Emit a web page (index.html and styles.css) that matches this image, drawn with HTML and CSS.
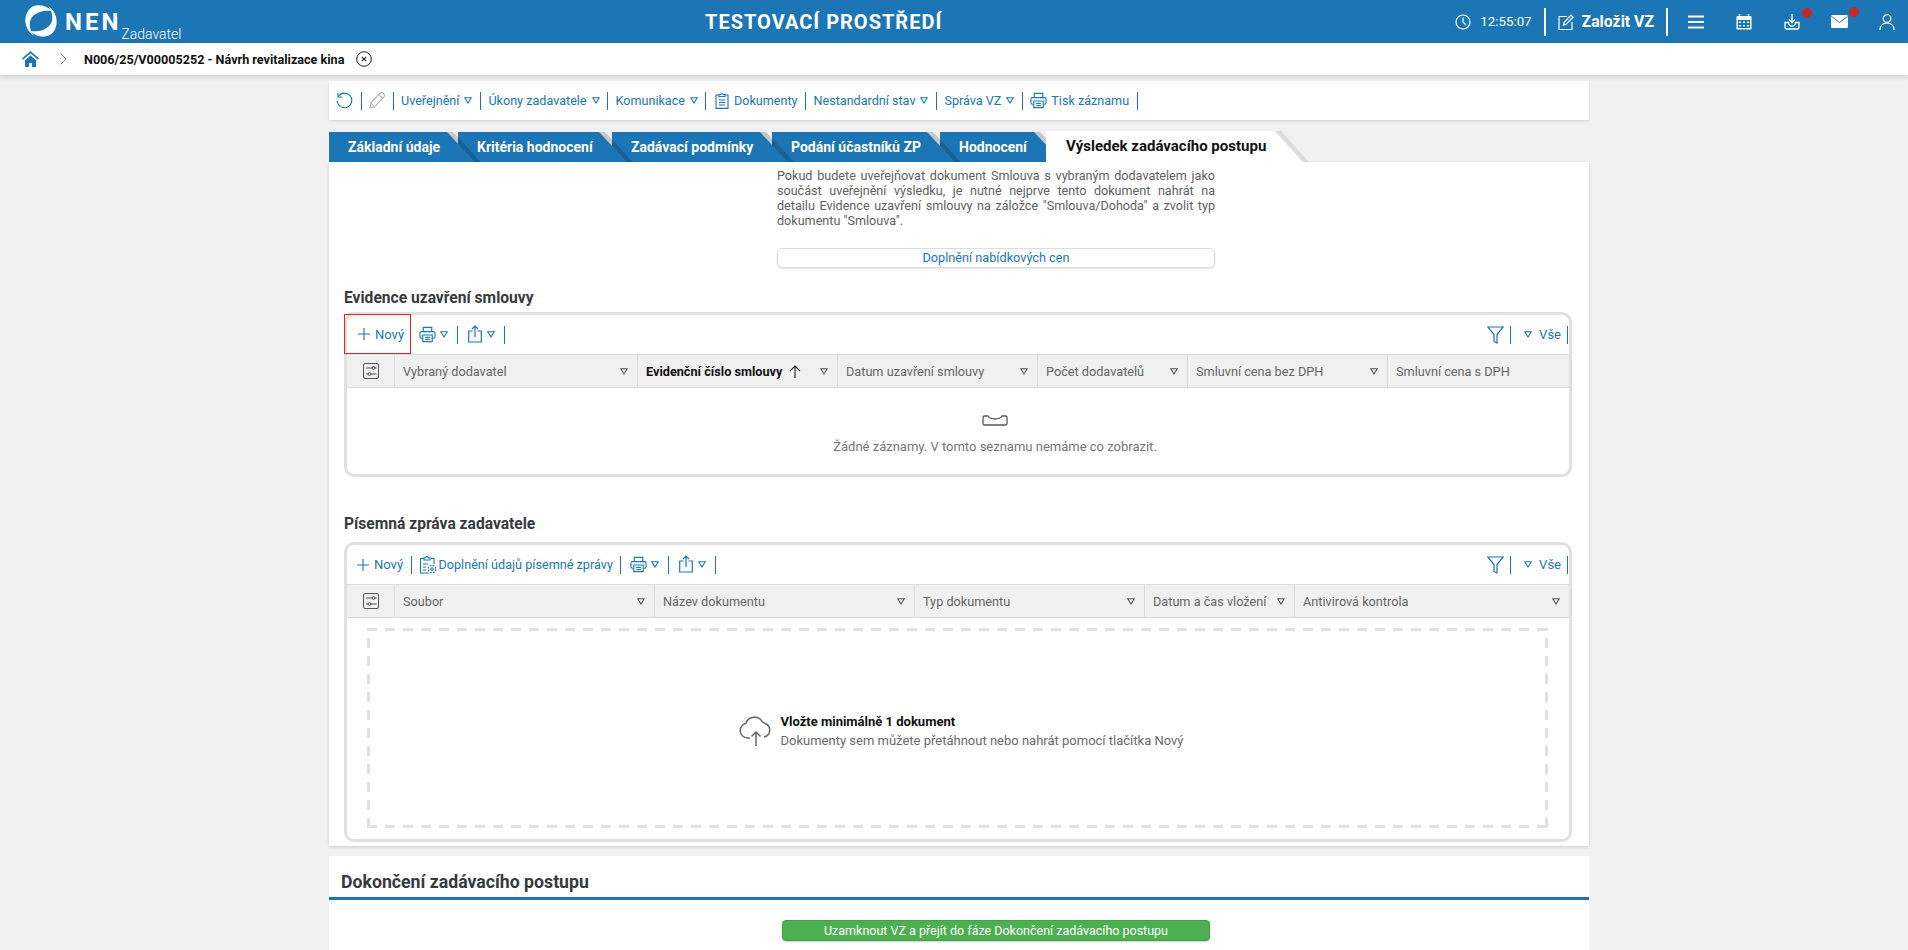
FILE: index.html
```html
<!DOCTYPE html>
<html lang="cs">
<head>
<meta charset="utf-8">
<title>NEN Zadavatel</title>
<link rel="stylesheet" href="styles.css">
</head>
<body>
<svg class="defs" width="0" height="0">
  <symbol id="tri" viewBox="0 0 8 7"><path d="M.8.8h6.4L4 6z" fill="none" stroke="currentColor" stroke-width="1.1"/></symbol>
  <symbol id="printer" viewBox="0 0 18 18"><g fill="none" stroke="currentColor" stroke-width="1.2"><path d="M4.5 6V1.5h9V6"/><path d="M4 13H2.6a1.6 1.6 0 0 1-1.6-1.600V7.600A1.600 1.600 0 0 1 2.600 6h12.800A1.600 1.600 0 0 1 17 7.600v3.800a1.600 1.600 0 0 1-1.600 1.600H14"/><path d="M4 9.500h10v7H4zM6.500 12h5M6.500 14.300h5"/></g></symbol>
  <symbol id="share" viewBox="0 0 14 18"><g fill="none" stroke="currentColor" stroke-width="1.200"><path d="M4.500 6H.7v11h12.600V6H9.500"/><path d="M7 12V1M4 4l3-3 3 3"/></g></symbol>
  <symbol id="filter" viewBox="0 0 17 18"><path d="M.8 1h15.400L10 8.500V17l-3-1.500v-7z" fill="none" stroke="currentColor" stroke-width="1.200"/></symbol>
  <symbol id="plus" viewBox="0 0 12 12"><path d="M6 0v12M0 6h12" stroke="currentColor" stroke-width="1.100"/></symbol>
  <symbol id="cols" viewBox="0 0 16 16"><g fill="none" stroke="currentColor" stroke-width="1"><rect x=".5" y=".5" width="15" height="15" rx="1.500"/><path d="M3 5h6M12 5h1.500M3 11h2M8 11h5.500"/><circle cx="10.500" cy="5" r="1.400"/><circle cx="6.500" cy="11" r="1.400"/></g></symbol>
</svg>

<header class="topbar">
  <div class="brand">
    <svg class="logo" viewBox="0 0 32 32"><g fill="#fff"><path d="M27 6C20-1 8-2 3 6c-5 8-3 19 6 25-5-6-6-15-1-20S21 5 27 6z"/><path d="M5 26c7 7 19 8 24 0 5-8 3-19-6-25 5 6 6 15 1 20S11 27 5 26z"/></g></svg>
    <span class="brand-name">NEN</span>
    <span class="brand-role">Zadavatel</span>
  </div>
  <div class="env-title">TESTOVACÍ PROSTŘEDÍ</div>
  <div class="top-actions">
    <svg class="ic-clock" viewBox="0 0 16 16"><g fill="none" stroke="#fff" stroke-width="1.200"><circle cx="8" cy="8" r="7"/><path d="M8 3.500V8l3 3"/></g></svg>
    <span class="clock">12:55:07</span>
    <span class="top-sep"></span>
    <svg class="ic-new" viewBox="0 0 16 16"><g fill="none" stroke="#fff" stroke-width="1.200"><path d="M9 2.500H1v13h13V8"/><path d="M5.500 11l.8-3L13 1.200l2 2L8.300 10z"/></g></svg>
    <span class="new-vz">Založit VZ</span>
    <span class="top-sep sep-b"></span>
    <svg class="top-ic ic-menu" viewBox="0 0 16 14"><path d="M0 1.500h16M0 7h16M0 12.500h16" stroke="#fff" stroke-width="1.800"/></svg>
    <svg class="top-ic" viewBox="0 0 16 16"><rect x="0.500" y="2" width="15" height="13.500" rx="1.200" fill="#fff"/><path d="M3.500 0v3M12.500 0v3" stroke="#fff" stroke-width="1.400"/><path d="M2 6h12v8H2z" fill="#1c75b4"/><path d="M3 7.500h2v1.500H3zM7 7.500h2v1.500H7zM11 7.500h2v1.500h-2zM3 11h2v1.500H3zM7 11h2v1.500H7zM11 11h2v1.500h-2z" fill="#fff"/></svg>
    <span class="badged">
      <svg class="top-ic ic-tight" viewBox="0 0 16 16"><g fill="none" stroke="#fff" stroke-width="1.300"><path d="M8 0v8M5 5.500L8 8.500l3-3"/><path d="M1 8.500v4.500a2 2 0 0 0 2 2h10a2 2 0 0 0 2-2V8.500h-3.500a3.500 3.500 0 0 1-7 0z"/></g></svg>
      <i class="dot dot-dl"></i>
    </span>
    <span class="badged">
      <svg class="top-ic ic-tight ic-mail" viewBox="0 0 17 13"><rect width="17" height="13" rx="1.500" fill="#fff"/><path d="M.5 1.500l8 6 8-6" fill="none" stroke="#1c75b4" stroke-width="1"/></svg>
      <i class="dot"></i>
    </span>
    <svg class="top-ic ic-user" viewBox="0 0 16 16"><g fill="none" stroke="#fff" stroke-width="1.200"><circle cx="8" cy="4.500" r="3.800"/><path d="M.8 16c.3-4 3-7 7.200-7s6.900 3 7.200 7"/></g></svg>
  </div>
</header>

<nav class="crumbs">
  <svg class="ic-home" viewBox="0 0 17 16"><path d="M8.500 0L0 7.500l1 1.200 7.500-6.500L16 8.700l1-1.200z" fill="#1c75b4"/><path d="M3 9.200l5.500-4.700L14 9.200V16H10v-4H7v4H3z" fill="#1c75b4"/></svg>
  <svg class="ic-chev" viewBox="0 0 7 12"><path d="M.7.7L6 6 .7 11.300" fill="none" stroke="#888" stroke-width="1"/></svg>
  <strong class="crumb-text">N006/25/V00005252 - Návrh revitalizace kina</strong>
  <svg class="ic-close" viewBox="0 0 16 16"><circle cx="8" cy="8" r="7.300" fill="none" stroke="#222" stroke-width="1"/><path d="M5.800 5.800l4.400 4.400M10.200 5.800l-4.400 4.400" stroke="#222" stroke-width="1.100"/></svg>
</nav>

<main class="page">
  <div class="actionbar">
    <svg class="i-refresh" viewBox="0 0 17 17"><g fill="none" stroke="#1c75b4" stroke-width="1.100"><path d="M2.300 4.500A7.300 7.300 0 1 1 1.200 9"/><path d="M2 1v4h4"/></g></svg>
    <span class="sep"></span>
    <svg class="i-pencil" viewBox="0 0 16 17"><g fill="none" stroke="#b8b0a8" stroke-width="1.100"><path d="M1 16l1-5.500L11 1.200a2 2 0 0 1 3 0l.8.8a2 2 0 0 1 0 3L5.500 15z"/><path d="M2 10.500l3.500 4.500M9.700 2.700l4 3.800"/></g></svg>
    <span class="sep"></span>
    <span class="act">Uveřejnění<svg class="tri"><use href="#tri"/></svg></span>
    <span class="sep"></span>
    <span class="act">Úkony zadavatele<svg class="tri"><use href="#tri"/></svg></span>
    <span class="sep"></span>
    <span class="act">Komunikace<svg class="tri"><use href="#tri"/></svg></span>
    <span class="sep"></span>
    <span class="act"><svg class="i-clip" viewBox="0 0 14 17"><g fill="none" stroke="#1c75b4" stroke-width="1.100"><path d="M4 3H1v13.400h12V3h-3"/><path d="M4 4.500V2.500h1.800a1.300 1.300 0 0 1 2.400 0H10v2zM4 8h6M4 10.500h6M4 13h6"/></g></svg>Dokumenty</span>
    <span class="sep"></span>
    <span class="act">Nestandardní stav<svg class="tri"><use href="#tri"/></svg></span>
    <span class="sep"></span>
    <span class="act">Správa VZ<svg class="tri"><use href="#tri"/></svg></span>
    <span class="sep"></span>
    <span class="act"><svg class="i-print"><use href="#printer"/></svg>Tisk záznamu</span>
    <span class="sep"></span>
  </div>

  <div class="tabs">
    <span class="tab t1">Základní údaje</span>
    <span class="tab t2">Kritéria hodnocení</span>
    <span class="tab t3">Zadávací podmínky</span>
    <span class="tab t4">Podání účastníků ZP</span>
    <span class="tab t5">Hodnocení</span>
    <span class="tab active">Výsledek zadávacího postupu</span>
  </div>

  <section class="panel">
    <p class="notice">Pokud budete uveřejňovat dokument Smlouva s vybraným dodavatelem jako součást uveřejnění výsledku, je nutné nejprve tento dokument nahrát na detailu Evidence uzavření smlouvy na záložce "Smlouva/Dohoda" a zvolit typ dokumentu "Smlouva".</p>
    <div class="wide-btn">Doplnění nabídkových cen</div>

    <h2 class="sec-title first">Evidence uzavření smlouvy</h2>
    <div class="grid-box box-a">
      <div class="grid-tools">
        <span class="tool tool-new selected"><svg class="i-plus"><use href="#plus"/></svg>Nový</span>
        <span class="tool drop first-drop"><svg class="i-print"><use href="#printer"/></svg><svg class="tri"><use href="#tri"/></svg></span>
        <span class="sep wide"></span>
        <span class="tool drop"><svg class="i-share"><use href="#share"/></svg><svg class="tri"><use href="#tri"/></svg></span>
        <span class="sep wide"></span>
        <span class="tools-right">
          <svg class="i-filter"><use href="#filter"/></svg>
          <span class="sep"></span>
          <svg class="tri all-tri"><use href="#tri"/></svg>
          <span class="all">Vše</span>
          <span class="sep end"></span>
        </span>
      </div>
      <div class="grid-head cols-a">
        <span class="hc hc-set"><svg class="i-cols"><use href="#cols"/></svg></span>
        <span class="hc">Vybraný dodavatel<svg class="tri"><use href="#tri"/></svg></span>
        <span class="hc sorted"><b>Evidenční číslo smlouvy</b><svg class="i-up" viewBox="0 0 12 13"><path d="M6 13V1M1 6l5-5 5 5" fill="none" stroke="#222" stroke-width="1.100"/></svg><svg class="tri"><use href="#tri"/></svg></span>
        <span class="hc">Datum uzavření smlouvy<svg class="tri"><use href="#tri"/></svg></span>
        <span class="hc">Počet dodavatelů<svg class="tri"><use href="#tri"/></svg></span>
        <span class="hc">Smluvní cena bez DPH<svg class="tri"><use href="#tri"/></svg></span>
        <span class="hc">Smluvní cena s DPH</span>
      </div>
      <div class="empty">
        <svg class="i-empty" viewBox="0 0 26 11"><path d="M1 2.500q0-1.500 1.500-1.500h3.500q2 3 7 3t7-3h3.500q1.500 0 1.500 1.500v6q0 1.500-1.500 1.500h-21q-1.500 0-1.500-1.500z" fill="none" stroke="#555" stroke-width="1.300"/></svg>
        <span>Žádné záznamy. V tomto seznamu nemáme co zobrazit.</span>
      </div>
    </div>

    <h2 class="sec-title second">Písemná zpráva zadavatele</h2>
    <div class="grid-box box-b">
      <div class="grid-tools">
        <span class="tool tool-new"><svg class="i-plus"><use href="#plus"/></svg>Nový</span>
        <span class="sep"></span>
        <span class="tool tool-doc"><svg class="i-docs" viewBox="0 0 18 18"><g fill="none" stroke="#1c75b4" stroke-width="1.100"><path d="M5 2.500H1.500v14.500h8M12 2.500h3V8"/><path d="M5 4V1.800h1.700a1.300 1.300 0 0 1 2.600 0H11V4zM4 8h5M4 11h3M4 14h3"/><circle cx="13" cy="13" r="3.800" stroke-dasharray="2 1"/><circle cx="13" cy="13" r="1.300"/></g></svg>Doplnění údajů písemné zprávy</span>
        <span class="sep"></span>
        <span class="tool drop"><svg class="i-print"><use href="#printer"/></svg><svg class="tri"><use href="#tri"/></svg></span>
        <span class="sep wide"></span>
        <span class="tool drop"><svg class="i-share"><use href="#share"/></svg><svg class="tri"><use href="#tri"/></svg></span>
        <span class="sep wide"></span>
        <span class="tools-right">
          <svg class="i-filter"><use href="#filter"/></svg>
          <span class="sep"></span>
          <svg class="tri all-tri"><use href="#tri"/></svg>
          <span class="all">Vše</span>
          <span class="sep end"></span>
        </span>
      </div>
      <div class="grid-head cols-b">
        <span class="hc hc-set"><svg class="i-cols"><use href="#cols"/></svg></span>
        <span class="hc">Soubor<svg class="tri"><use href="#tri"/></svg></span>
        <span class="hc">Název dokumentu<svg class="tri"><use href="#tri"/></svg></span>
        <span class="hc">Typ dokumentu<svg class="tri"><use href="#tri"/></svg></span>
        <span class="hc">Datum a čas vložení<svg class="tri"><use href="#tri"/></svg></span>
        <span class="hc">Antivirová kontrola<svg class="tri"><use href="#tri"/></svg></span>
      </div>
      <div class="dropzone">
        <svg class="i-cloud" viewBox="0 0 33 32"><g fill="none" stroke="#666" stroke-width="1.500"><path d="M11 23H8.500A7.500 7.500 0 0 1 7 8.200 9 9 0 0 1 23.500 7a6 6 0 0 1 2.500 1.500A7 7 0 0 1 25 22"/><path d="M17 31V17M12.500 21.500L17 17l4.500 4.500"/></g></svg>
        <div class="dz-text">
          <strong>Vložte minimálně 1 dokument</strong>
          <span>Dokumenty sem můžete přetáhnout nebo nahrát pomocí tlačítka Nový</span>
        </div>
      </div>
    </div>
  </section>

  <section class="finish">
    <h2 class="finish-title">Dokončení zadávacího postupu</h2>
    <div class="green-btn">Uzamknout VZ a přejít do fáze Dokončení zadávacího postupu</div>
  </section>
</main>
</body>
</html>
```

FILE: styles.css
```css
* { box-sizing: border-box; }
html, body { margin: 0; height: 950px; overflow: hidden; }
body { background: #f1f1f1; font-family: Roboto, "Liberation Sans", sans-serif; font-size: 13px; color: #616161; }
.defs { position: absolute; }
svg { display: block; flex: none; }

/* top bar */
.topbar { height: 43px; background: #1c75b4; color: #fff; display: flex; align-items: center; position: relative; }
.brand { display: flex; align-items: flex-start; padding-left: 25px; width: 705px; height: 43px; }
.logo { width: 32px; height: 32px; margin-top: 5px; }
.brand-name { font-weight: 700; font-size: 24px; line-height: 26px; letter-spacing: 3px; margin: 9px 0 0 8px; }
.brand-role { font-size: 14px; font-weight: 300; line-height: 16px; margin: 26px 0 0 0; }
.env-title { font-size: 20px; font-weight: 700; letter-spacing: 1px; white-space: nowrap; width: 238px; }
.top-actions { display: flex; align-items: center; margin-left: auto; padding-right: 13px; }
.ic-clock { width: 16px; height: 16px; }
.clock { font-size: 13.300px; margin: 0 12px 0 9px; }
.top-sep { width: 2px; height: 28px; background: #fff; }
.ic-new { width: 16px; height: 16px; margin-left: 12px; }
.new-vz { font-weight: 700; font-size: 15.800px; margin: 0 12px 0 8px; }
.sep-b { margin-right: 20px; }
.top-ic { width: 16px; height: 16px; margin-right: 32px; }
.top-ic.ic-tight { margin-right: 31px; }
.ic-menu { height: 14px; }
.ic-mail { width: 17px; height: 13px; }
.ic-user { margin-right: 0; }
.badged { position: relative; display: block; }
.dot { position: absolute; width: 10px; height: 10px; border-radius: 50%; background: #c62828; top: -8px; left: 18px; }
.dot-dl { top: -6px; }

/* breadcrumb */
.crumbs { height: 32px; background: #fff; display: flex; align-items: center; box-shadow: 0 2px 5px rgba(0,0,0,.14); position: relative; }
.ic-home { width: 17px; height: 16px; margin-left: 22px; }
.ic-chev { width: 7px; height: 12px; margin-left: 21px; }
.crumb-text { font-size: 12.600px; font-weight: 700; color: #111; margin-left: 17px; white-space: nowrap; }
.ic-close { width: 16px; height: 16px; margin-left: 12px; }

/* page */
.page { margin: 0 319px 0 329px; padding-top: 6px; }
.actionbar { height: 39px; background: #fff; display: flex; align-items: center; padding-left: 7px; box-shadow: 0 1px 2px rgba(0,0,0,.14); color: #1c75b4; font-size: 12.600px; }
.i-refresh { width: 17px; height: 17px; }
.i-pencil { width: 16px; height: 17px; }
.sep { width: 1px; height: 18px; background: #1c75b4; margin: 0 7.500px; flex: none; }
.sep.wide { margin: 0 9px; }
.act { display: flex; align-items: center; white-space: nowrap; }
.tri { width: 8px; height: 7px; margin-left: 5px; }
.i-clip { width: 14px; height: 17px; margin: 0 5px 0 1px; }
.i-print { width: 17px; height: 17px; margin-right: 4px; }

/* tabs */
.tabs { display: flex; align-items: flex-end; height: 31px; margin-top: 11px; }
.tab { position: relative; height: 30px; line-height: 30px; padding: 0 0 0 19px; margin-right: 11px; background: #1c75b4; color: #fff; font-weight: 700; font-size: 14px; white-space: nowrap; }
.tab::before, .tab::after { content: ""; position: absolute; top: 0; left: 100%; height: 100%; }
.tab::before { width: 34px; background: rgba(0,0,0,.17); clip-path: polygon(0 0, 6px 0, 100% 100%, 0 100%); }
.tab::after { width: 28px; background: inherit; clip-path: polygon(0 0, 100% 100%, 0 100%); }
.t1 { width: 118px; z-index: 6; }
.t2 { width: 141px; margin-right: 13px; z-index: 5; }
.t3 { width: 148px; margin-right: 12px; z-index: 4; }
.t4 { width: 155px; margin-right: 13px; z-index: 3; }
.t5 { width: 94px; margin-right: 12px; z-index: 2; }
.tab.active { height: 31px; width: 229px; margin-right: 0; padding: 0 0 0 20px; line-height: 30px; background: #fff; color: #111; font-size: 15px; z-index: 7; }
.tab.active::before { background: rgba(0,0,0,.09); }

/* panel */
.panel { background: #fff; padding: 6px 16px 4px 15px; height: 684px; box-shadow: 0 1px 3px rgba(0,0,0,.16); }
.notice { width: 438px; margin: 0 0 0 433px; font-size: 12.600px; line-height: 15px; text-align: justify; color: #616161; }
.wide-btn { width: 438px; height: 20px; margin: 20px 0 0 433px; border: 1px solid #ddd; border-radius: 5px; box-shadow: 0 1px 2px rgba(0,0,0,.12); text-align: center; line-height: 18px; font-size: 12.700px; color: #1c75b4; }
.sec-title { margin: 0; font-size: 15.600px; font-weight: 700; line-height: 20px; color: #363a40; }
.sec-title.first { margin-top: 20px; }
.sec-title.second { margin-top: 37px; }
.grid-box { border: 3px solid #e0e0e0; border-radius: 10px; width: 1228px; overflow: visible; background: #fff; }
.box-a { height: 165px; margin-top: 4px; }
.box-b { height: 300px; margin-top: 8px; }
.grid-tools { height: 39px; display: flex; align-items: center; color: #1c75b4; padding-right: 1px; }
.tool { display: flex; align-items: center; white-space: nowrap; }
.tool-new { padding-left: 10px; width: 56.500px; }
.tool-new.selected { width: 67px; height: 40px; margin: -2px 0 -1px -3px; padding-left: 13px; border: 1px solid #ee1c25; }
.i-plus { width: 12px; height: 12px; margin-right: 5px; }
.i-docs { width: 18px; height: 18px; margin: 0 2px 0 -1px; }
.tool-doc { font-size: 12.650px; }
.tool.drop { padding-left: 1px; }
.drop .tri { margin-left: 0; }
.first-drop { margin-left: 7px; }
.i-share { width: 14px; height: 18px; margin: -2px 5px 0 0; }
.tools-right { margin-left: auto; display: flex; align-items: center; }
.i-filter { width: 17px; height: 18px; }
.tools-right .sep { margin: 0 0 0 6px; }
.all-tri { margin: 0 0 0 13px; }
.all { margin-left: 7px; }
.tools-right .sep.end { margin-left: 6px; }
.grid-head { display: grid; height: 34px; background: #f0f0f0; border-top: 1px solid #ddd; border-bottom: 1px solid #d9d9d9; font-size: 12.700px; }
.cols-a { grid-template-columns: 48px 243px 200px 200px 150px 200px 181px; }
.cols-b { grid-template-columns: 48px 260px 260px 230px 150px 274px; }
.hc { display: flex; align-items: center; justify-content: space-between; padding: 0 9px 0 8px; border-right: 1px solid #dadada; color: #666; white-space: nowrap; }
.hc:last-child { border-right: 0; }
.hc .tri { margin-left: auto; color: #555; }
.hc-set { justify-content: center; padding: 0; }
.i-cols { width: 16px; height: 16px; color: #555; }
.sorted b { color: #111; font-weight: 700; }
.i-up { width: 12px; height: 13px; margin-left: 7px; }
.empty { display: flex; flex-direction: column; align-items: center; padding: 27px 0 0 74px; color: #757575; }
.i-empty { width: 26px; height: 11px; margin-bottom: 13px; }
.dropzone { margin: 10px 21px 0 20px; height: 200px; display: flex; align-items: center; justify-content: center; padding: 5px 0 0 7px;
  background:
    repeating-linear-gradient(90deg, #e0e0e0 0 10px, transparent 10px 18px) 0 0 / 100% 3px no-repeat,
    repeating-linear-gradient(90deg, #e0e0e0 0 10px, transparent 10px 18px) 0 100% / 100% 3px no-repeat,
    repeating-linear-gradient(0deg, #e0e0e0 0 10px, transparent 10px 18px) 0 0 / 3px 100% no-repeat,
    repeating-linear-gradient(0deg, #e0e0e0 0 10px, transparent 10px 18px) 100% 0 / 3px 100% no-repeat;
}
.i-cloud { width: 33px; height: 32px; margin-right: 9px; }
.dz-text { display: flex; flex-direction: column; line-height: 19px; color: #6a6a6a; }
.dz-text strong { color: #111; font-weight: 700; font-size: 13px; }

/* finish */
.finish { background: #fff; margin-top: 10px; height: 100px; }
.finish-title { margin: 0; height: 44px; padding: 15px 0 0 12px; border-bottom: 3px solid #1c75b4; font-size: 17.700px; font-weight: 700; line-height: 22px; color: #363a40; }
.green-btn { width: 428px; height: 21px; margin: 20px 0 0 453px; background: #4caf50; border: 1px solid #43a047; border-radius: 4px; box-shadow: 0 1px 2px rgba(0,0,0,.2); color: #fff; text-align: center; line-height: 19px; font-size: 12.500px; }
```
